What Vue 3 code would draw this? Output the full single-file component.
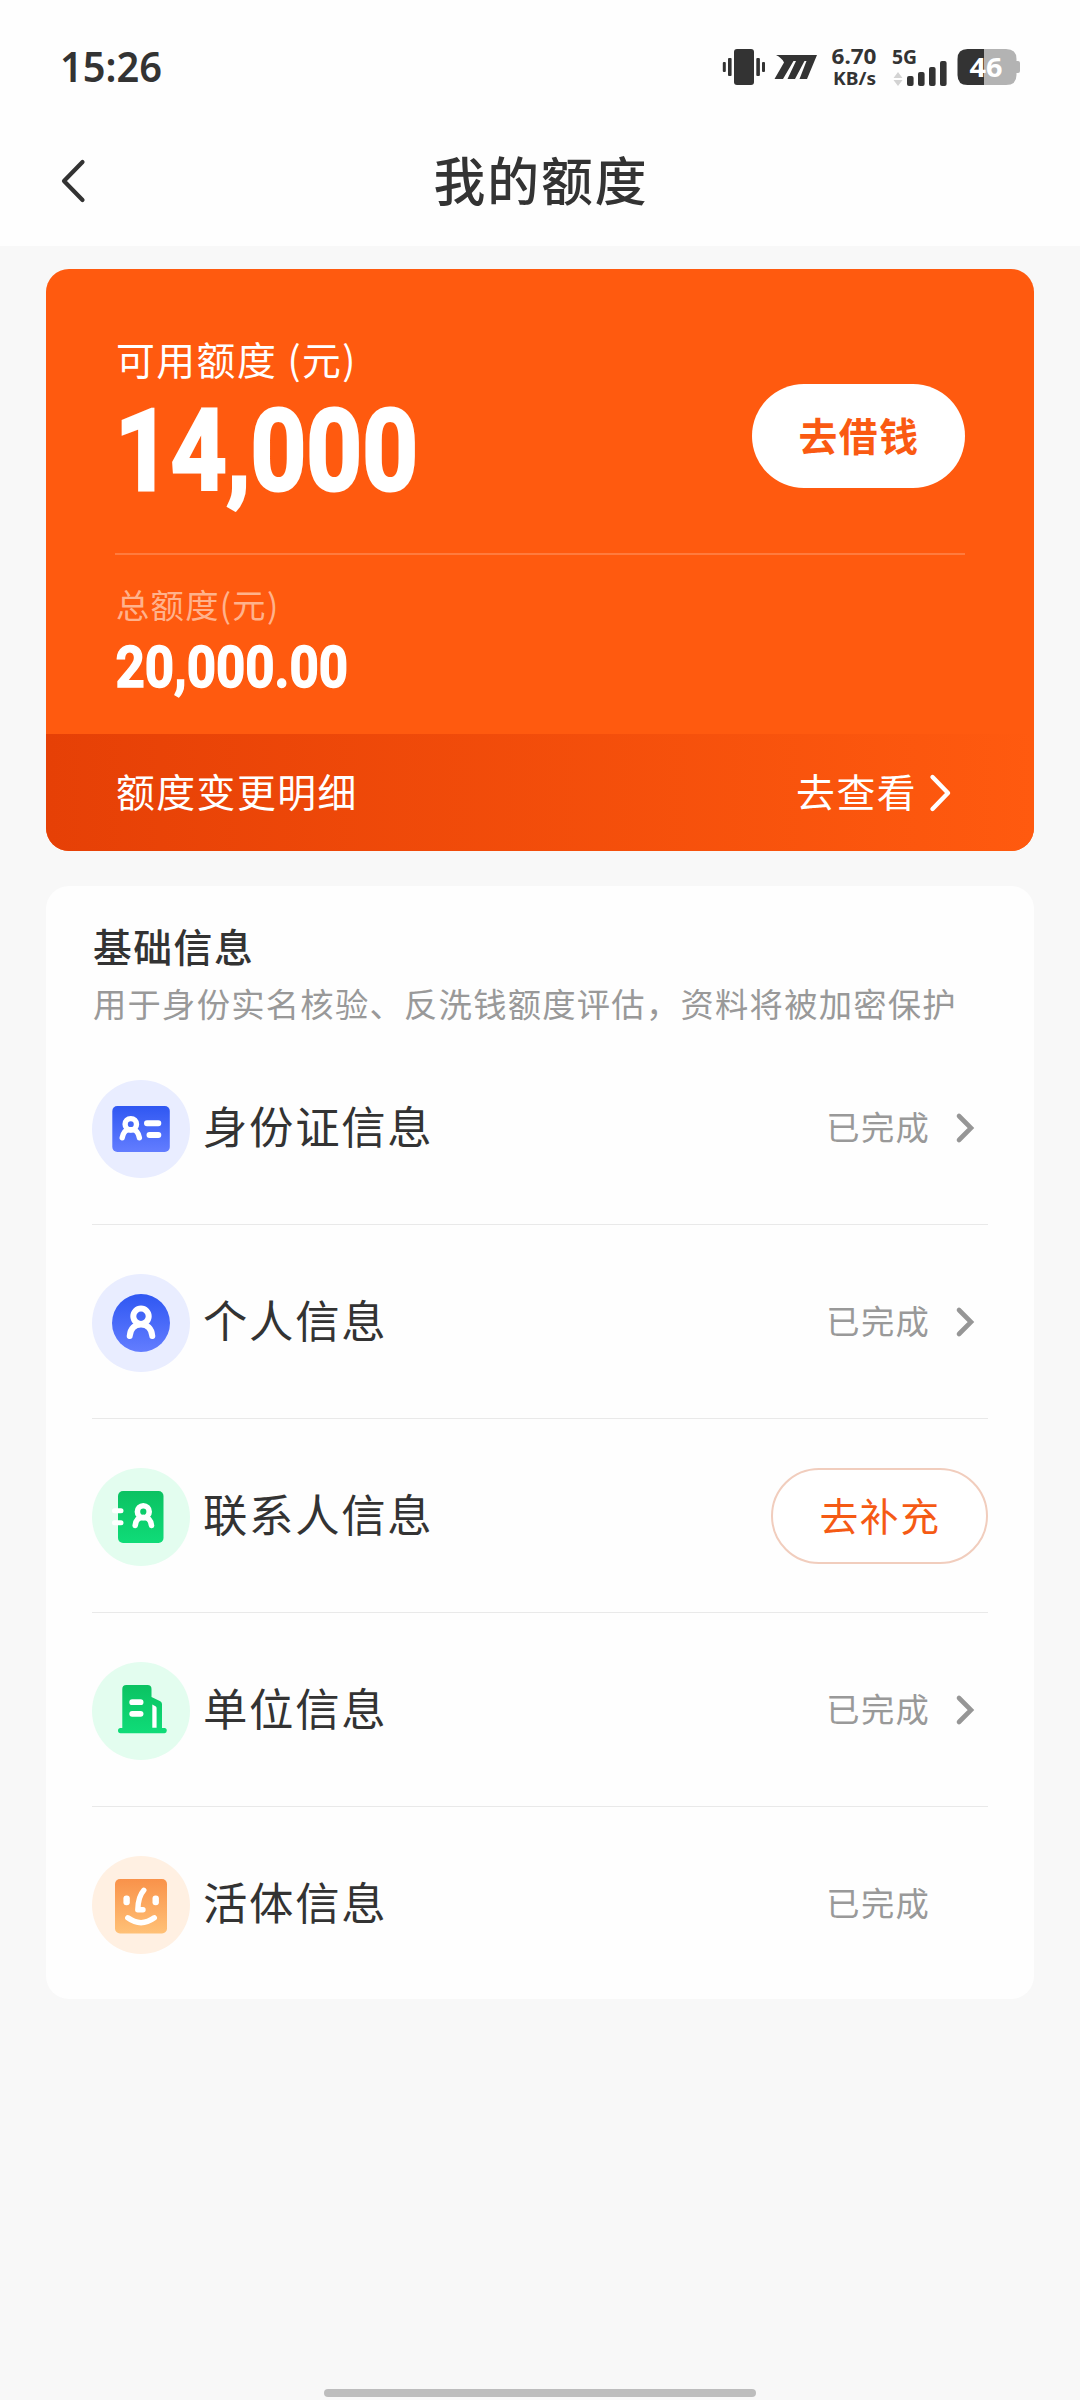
<script setup>
const rows = [
  { key: 'idcard', name: '身份证信息', status: '已完成', arrow: true },
  { key: 'person', name: '个人信息', status: '已完成', arrow: true },
  { key: 'contact', name: '联系人信息', action: '去补充' },
  { key: 'company', name: '单位信息', status: '已完成', arrow: true },
  { key: 'face', name: '活体信息', status: '已完成' },
]
</script>

<template>
  <div class="page">
    <header class="top">
      <div class="statusbar">
        <svg class="clock" width="110" height="60" viewBox="0 0 110 60">
          <text x="0" y="47" textLength="102" lengthAdjust="spacingAndGlyphs">15:26</text>
        </svg>
        <svg class="sys" width="300" height="60" viewBox="720 36 300 60">
          <g fill="#333">
            <rect x="734" y="49" width="20" height="36" rx="3" />
            <rect x="728" y="58" width="3.6" height="18" rx="1" />
            <rect x="722.8" y="62" width="3" height="10" rx="1" />
            <rect x="756.3" y="58" width="3.6" height="18" rx="1" />
            <rect x="762" y="62" width="3" height="10" rx="1" />
            <path d="M776 55H817L807 79H799.5L806.5 61H804.5L795 79H787.5L796 61H793.5L783 79H774.5L784 62.5Q782 58 776 55Z" />
          </g>
          <text class="bold" x="831.5" y="64" font-size="21.5" textLength="45" lengthAdjust="spacingAndGlyphs">6.70</text>
          <text class="bold" x="833" y="84.8" font-size="18.5" textLength="43" lengthAdjust="spacingAndGlyphs">KB/s</text>
          <text class="bold" x="892" y="64" font-size="19" textLength="25" lengthAdjust="spacingAndGlyphs">5G</text>
          <path d="M893.5 78L898 72L902.5 78ZM893.5 80L898 86L902.5 80Z" fill="#d3d3d3" />
          <g fill="#333">
            <rect x="907" y="76" width="6.6" height="10" rx="2" />
            <rect x="918" y="72" width="6.6" height="14" rx="2" />
            <rect x="929" y="67" width="6.6" height="19" rx="2" />
            <rect x="940" y="61" width="6.6" height="25" rx="2" />
          </g>
          <path d="M984 49H1006Q1016.500 49 1016.500 59V61H1018Q1020 61 1020 63V71Q1020 73 1018 73H1016.500V75Q1016.500 85 1006 85H984Z" fill="#b3b3b3" />
          <path d="M984 49H967.500Q957.500 49 957.500 59V75Q957.500 85 967.500 85H984Z" fill="#333" />
          <text class="bold level" x="969.5" y="76.500" font-size="27" textLength="33" lengthAdjust="spacingAndGlyphs">46</text>
        </svg>
      </div>
      <div class="navbar">
        <svg class="back" width="30" height="48" viewBox="0 0 30 48">
          <path d="M22.500 5L4 24L22.500 43" fill="none" stroke="#333" stroke-width="4.200" stroke-linecap="round" stroke-linejoin="round" />
        </svg>
        <h1>我的额度</h1>
        <span class="nav-space"></span>
      </div>
    </header>

    <section class="quota">
      <div class="available">
        <div class="available-left">
          <div class="label">可用额度 (元)</div>
          <svg class="num" width="320" height="104" viewBox="0 0 320 104">
            <text x="0" y="86" font-size="114" stroke-width="3" textLength="303" lengthAdjust="spacingAndGlyphs">14,000</text>
          </svg>
        </div>
        <button class="borrow">去借钱</button>
      </div>
      <div class="total">
        <div class="total-label">总额度(元)</div>
        <svg class="num" width="260" height="56" viewBox="0 0 260 56">
          <text x="0.5" y="46.500" font-size="57.500" stroke-width="1.400" textLength="232.500" lengthAdjust="spacingAndGlyphs">20,000.00</text>
        </svg>
      </div>
      <div class="changes">
        <span class="shift">额度变更明细</span>
        <span class="view"><span class="shift">去查看</span>
          <svg width="24" height="40" viewBox="0 0 24 40">
            <path d="M3.500 4L19 20L3.500 36" fill="none" stroke="#fff" stroke-width="4.400" stroke-linecap="round" stroke-linejoin="round" />
          </svg>
        </span>
      </div>
    </section>

    <section class="info">
      <h2>基础信息</h2>
      <p>用于身份实名核验、反洗钱额度评估，资料将被加密保护</p>
      <ul>
        <li v-for="row in rows" :key="row.key">
          <svg class="icon" width="98" height="98" viewBox="0 0 98 98">
            <defs>
              <linearGradient id="blue" x1="0" y1="0" x2="0" y2="1">
                <stop offset="0" stop-color="#2f57f2" />
                <stop offset="1" stop-color="#637dff" />
              </linearGradient>
              <linearGradient id="green" x1="0" y1="0" x2="0" y2="1">
                <stop offset="0" stop-color="#0bc262" />
                <stop offset="1" stop-color="#0fdc78" />
              </linearGradient>
              <linearGradient id="orange" x1="0" y1="0" x2="0" y2="1">
                <stop offset="0" stop-color="#f9924a" />
                <stop offset="1" stop-color="#ffc177" />
              </linearGradient>
            </defs>
            <template v-if="row.key === 'idcard'">
              <circle cx="49" cy="49" r="49" fill="#e9edff" />
              <rect x="20.300" y="26" width="57.500" height="46" rx="5" fill="url(#blue)" />
              <g fill="none" stroke="#fff" stroke-width="5.400" stroke-linecap="round">
                <circle cx="38.800" cy="44.300" r="5.700" />
                <path d="M30.200 57.800Q31.500 50.500 36 49.800H41.600Q46.100 50.500 47.400 57.800" />
                <path d="M55 43.200H66.300M57.500 54.900H66.300" stroke-width="6" />
              </g>
            </template>
            <template v-else-if="row.key === 'person'">
              <circle cx="49" cy="49" r="49" fill="#e9edff" />
              <circle cx="49" cy="49" r="29" fill="url(#blue)" />
              <g fill="none" stroke="#fff" stroke-width="6" stroke-linecap="round">
                <circle cx="49" cy="42.200" r="7.700" />
                <path d="M37.700 62C38.500 54 43 50.500 49 50.500S59.500 54 60.300 62" />
              </g>
            </template>
            <template v-else-if="row.key === 'contact'">
              <circle cx="49" cy="49" r="49" fill="#e3fdef" />
              <rect x="26" y="23" width="45.500" height="52" rx="5" fill="url(#green)" />
              <g fill="none" stroke="#fff" stroke-width="5.600" stroke-linecap="round">
                <circle cx="51.300" cy="43.700" r="5.900" />
                <path d="M43.200 57.500C44 50.500 47.500 49.500 51.300 49.500S58.600 50.500 59.500 57.500" />
                <path d="M22.500 42.700H29M22.500 54.700H29" stroke-width="5" />
              </g>
            </template>
            <template v-else-if="row.key === 'company'">
              <circle cx="49" cy="49" r="49" fill="#e3fdef" />
              <path d="M30.300 66V27Q30.300 23 34.300 23H55.500Q59.500 23 59.500 27V35L68.300 39.300Q70 40.200 70 42V66H72.500Q74.800 66 74.800 68.600T72.500 71.200H28.500Q26 71.200 26 68.600T28.500 66Z" fill="url(#green)" />
              <path d="M60.300 42.500L63.500 44.200Q64.600 44.800 64.600 46V65.800H60.300Z" fill="#fff" />
              <path d="M40.200 40.200H48.600M40.200 51.800H48.600" stroke="#fff" stroke-width="5.800" stroke-linecap="round" />
            </template>
            <template v-else>
              <circle cx="49" cy="49" r="49" fill="#fff0e2" />
              <rect x="23" y="23" width="52" height="54.500" rx="5" fill="url(#orange)" />
              <rect x="31.400" y="39.600" width="6.400" height="9.600" rx="3" fill="#fff" />
              <rect x="60.500" y="39.600" width="6.400" height="9.600" rx="3" fill="#fff" />
              <g fill="none" stroke="#fff" stroke-width="5.400" stroke-linecap="round" stroke-linejoin="round">
                <path d="M51.800 34.300C47.500 39 46 46 45.800 53.700H51" />
                <path d="M35.800 61.800Q49 71.500 62.300 61.800" />
              </g>
            </template>
          </svg>
          <span class="name">{{ row.name }}</span>
          <button v-if="row.action" class="fill">{{ row.action }}</button>
          <template v-else>
            <span class="status">{{ row.status }}</span>
            <span class="arrow">
              <svg v-if="row.arrow" width="22" height="34" viewBox="0 0 22 34">
                <path d="M4 5L16 17L4 29" fill="none" stroke="#969696" stroke-width="4.600" stroke-linecap="round" stroke-linejoin="miter" />
              </svg>
            </span>
          </template>
        </li>
      </ul>
    </section>

    <div class="home-bar"></div>
  </div>
</template>

<style>
html,
body {
  margin: 0;
  background: #f8f8f8;
}
</style>

<style scoped>
.page {
  display: flex;
  flex-direction: column;
  box-sizing: border-box;
  width: 1080px;
  height: 2400px;
  background: #f8f8f8;
  color: #333;
  font-family: "Noto Sans CJK SC", sans-serif;
}
.page svg {
  display: block;
  flex: none;
}
.top {
  height: 246px;
  background: #fefefe;
}
.statusbar {
  display: flex;
  justify-content: space-between;
  padding: 36px 60px 0 60px;
}
.clock {
  margin-top: -1px;
}
.clock text {
  fill: #333;
  font: 600 41px "Noto Sans", sans-serif;
}
.sys .bold {
  fill: #333;
  font-family: "Noto Sans", sans-serif;
  font-weight: 700;
}
.sys .level {
  fill: #fff;
}
.navbar {
  display: flex;
  align-items: center;
  justify-content: space-between;
  height: 54px;
  margin-top: 55px;
  padding: 0 60px;
}
.navbar h1 {
  margin: 2px 0 0;
  padding-left: 2px;
  font-size: 51.8px;
  font-weight: 500;
  line-height: 54px;
  letter-spacing: 2px;
}
.nav-space {
  width: 30px;
}
.back {
  margin-top: 6px;
}
.quota {
  display: flex;
  flex-direction: column;
  flex: none;
  height: 582px;
  margin: 23px 46px 0;
  border-radius: 23px;
  background: #ff5a0f;
  color: #fff;
  overflow: hidden;
}
.available {
  display: flex;
  justify-content: space-between;
  box-sizing: border-box;
  height: 286px;
  margin: 0 69px;
  padding-top: 65px;
  border-bottom: 2px solid #ff7b3e;
}
.label {
  padding-left: 1px;
  font-size: 38.8px;
  line-height: 48px;
  letter-spacing: 1.5px;
  white-space: pre;
}
.num {
  margin-top: 22px;
  overflow: visible;
}
.num text {
  fill: #fff;
  stroke: #fff;
  stroke-linejoin: miter;
  font-family: Roboto, sans-serif;
  font-weight: 700;
}
.borrow {
  box-sizing: border-box;
  width: 213px;
  height: 104px;
  margin-top: 50px;
  padding: 0 0 4px 1px;
  border: 0;
  border-radius: 52px;
  background: #fff;
  color: #fa5a12;
  font: 700 38.8px/100px "Noto Sans CJK SC", sans-serif;
  letter-spacing: 1.5px;
}
.total {
  height: 179px;
  margin: 0 69px;
}
.total-label {
  margin-top: 29px;
  padding-left: 1px;
  color: #ffb28c;
  font-size: 33.3px;
  line-height: 40px;
  letter-spacing: 1.3px;
}
.total .num {
  margin-top: 16px;
}
.changes {
  display: flex;
  flex: 1;
  align-items: center;
  justify-content: space-between;
  padding: 0 81px 0 70px;
  background: linear-gradient(90deg, #e64006, #ff5a0f);
  font-size: 38.8px;
  letter-spacing: 1.5px;
}
.shift {
  padding-bottom: 5px;
}
.view {
  display: flex;
  align-items: center;
  gap: 12px;
}
.info {
  flex: none;
  box-sizing: border-box;
  height: 1113px;
  margin: 35px 46px 0;
  padding: 35px 46px 0;
  border-radius: 23px;
  background: #fefefe;
}
.info h2 {
  margin: 0;
  padding-left: 1px;
  font-size: 38.8px;
  font-weight: 500;
  line-height: 48px;
  letter-spacing: 1.5px;
}
.info p {
  margin: 14px 0 0;
  padding-left: 1px;
  color: #999;
  font-size: 33.3px;
  line-height: 40px;
  letter-spacing: 1.26px;
  white-space: nowrap;
}
.info ul {
  margin: 8px 0 0;
  padding: 0;
  list-style: none;
}
.info li {
  display: flex;
  align-items: center;
  box-sizing: border-box;
  height: 194px;
  border-bottom: 1px solid #e9e9e9;
}
.info li:last-child {
  border-bottom: 0;
}
.icon {
  margin-top: 2px;
}
.name {
  flex: 1;
  margin-left: 13px;
  padding-bottom: 6px;
  font-size: 44.4px;
  line-height: 60px;
  letter-spacing: 1.7px;
}
.status {
  padding-bottom: 4px;
  color: #999;
  font-size: 33.3px;
  line-height: 44px;
  letter-spacing: 1.26px;
}
.arrow {
  width: 33px;
  margin-left: 25px;
}
.fill {
  box-sizing: border-box;
  width: 217px;
  height: 96px;
  padding: 0 0 4px 1px;
  border: 2px solid #f1cdbd;
  border-radius: 48px;
  background: #fff;
  color: #f55a14;
  font: 400 38.8px/88px "Noto Sans CJK SC", sans-serif;
  letter-spacing: 1.5px;
}
.home-bar {
  width: 432px;
  height: 8px;
  margin: auto auto 3px;
  border-radius: 4px;
  background: #bdbdbd;
}
</style>
